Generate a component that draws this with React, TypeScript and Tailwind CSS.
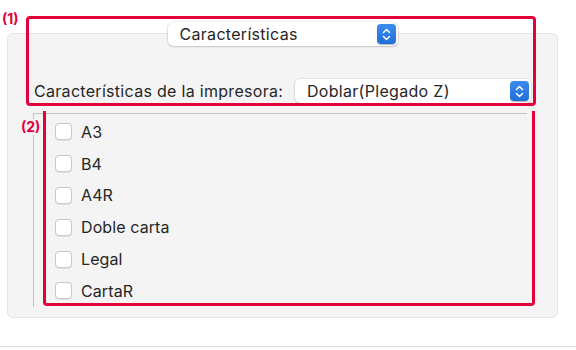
import { useState } from "react";

const RED = "border-[#e3003b]";

const SIZES = ["A3", "B4", "A4R", "Doble carta", "Legal", "CartaR"];

function Stepper() {
  return (
    <span className="flex h-[20px] w-[19px] items-center justify-center rounded-[4px] bg-gradient-to-b from-[#3c8cf0] to-[#1f6fd8] shadow-[0_0.5px_1px_rgba(0,0,0,0.3)]">
      <svg width="9" height="13" viewBox="0 0 9 13" fill="none">
        <path d="M1.5 4.5 L4.5 1.5 L7.5 4.5" stroke="white" strokeWidth="1.5" strokeLinecap="round" strokeLinejoin="round" />
        <path d="M1.5 8.5 L4.5 11.5 L7.5 8.5" stroke="white" strokeWidth="1.5" strokeLinecap="round" strokeLinejoin="round" />
      </svg>
    </span>
  );
}

function PopUp({ label, className }: { label: string; className: string }) {
  return (
    <div
      className={`flex h-[24px] items-center justify-between rounded-[5px] bg-white pl-[12px] pr-[2px] shadow-[0_0_0_0.5px_rgba(0,0,0,0.12),0_1px_2px_rgba(0,0,0,0.15)] ${className}`}
    >
      <span className="text-[16px] leading-none tracking-[0.3px] text-[#262626]">{label}</span>
      <Stepper />
    </div>
  );
}

function Check({ label }: { label: string }) {
  const [on, setOn] = useState(false);
  return (
    <label className="flex h-[31.8px] items-center gap-[9px]">
      <button
        type="button"
        onClick={() => setOn(!on)}
        className="h-[17px] w-[17px] rounded-[4px] border border-[#c9c9c9] bg-white shadow-[0_0.5px_1px_rgba(0,0,0,0.08)]"
      >
        {on && <span className="block text-[11px] leading-none text-[#1f6fd8]">✓</span>}
      </button>
      <span className="text-[16px] tracking-[0.1px] text-[#262626]">{label}</span>
    </label>
  );
}

export default function App() {
  return (
    <div className="relative h-[350px] w-[576px] overflow-hidden bg-white font-['Inter','Liberation_Sans',sans-serif]">
      <div className="flex flex-col items-center pl-[7px] pr-[18px] pt-[22px]">
        <PopUp label="Características" className="relative z-10 w-[230px]" />
        <div className="-mt-[13px] h-[285px] w-[551px] rounded-[6px] border border-[#e4e4e4] bg-[#f4f4f4] px-[25px] pt-[45px]">
          <div className="flex h-[24px] items-center justify-between pr-[1px]">
            <span className="pl-[1px] text-[16px] tracking-[0.3px] text-[#262626]">Características de la impresora:</span>
            <PopUp label="Doblar(Plegado Z)" className="w-[236px]" />
          </div>
          <div className="mt-[10px] h-[194px] w-[494px] border-l border-t border-[#c4c4c4] pl-[21px] pt-[2px]">
            {SIZES.map((s) => (
              <Check key={s} label={s} />
            ))}
          </div>
        </div>
      </div>
      <div className="mt-[28px] h-[1px] w-full bg-[#dcdcdc]" />

      {/* annotations */}
      <span className="absolute left-[2px] top-[12px] text-[14px] font-bold leading-none text-[#e3003b]">(1)</span>
      <div className={`absolute left-[26px] top-[16px] h-[90px] w-[510px] rounded-[4px] border-[3px] ${RED}`} />
      <span className="absolute left-[21px] top-[119px] bg-[#f4f4f4] py-[1px] text-[14px] font-bold leading-none text-[#e3003b]">(2)</span>
      <div className={`absolute left-[43px] top-[111px] h-[195px] w-[492px] rounded-b-[4px] border-x-[3px] border-b-[3px] ${RED}`} />
    </div>
  );
}
